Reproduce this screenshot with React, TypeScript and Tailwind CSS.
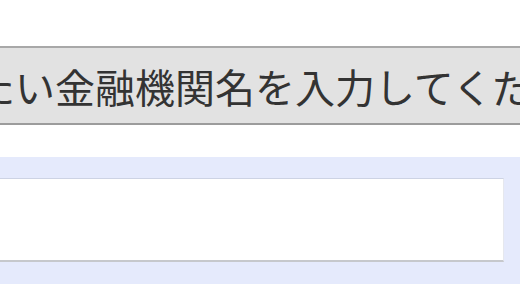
export default function App() {
  return (
    <div className="h-[300px] w-[520px] overflow-hidden bg-white pt-[46px] font-['Noto_Sans_CJK_JP',sans-serif]">
      <div className="flex h-[79px] items-center overflow-hidden border-t-2 border-b-2 border-t-[#a8a8a8] border-b-[#9c9c9c] bg-[#e2e2e2]">
        <p className="ml-[-25px] whitespace-nowrap text-[40px] leading-none text-[#333333]">
          たい金融機関名を入力してください
        </p>
      </div>
      <div className="mt-[32px] h-[127px] bg-[#e5eafc] pt-[21px] pr-[16px]">
        <div className="h-[84px] border-t border-r border-b-2 border-t-[#cdd3e4] border-r-[#e6e8ee] border-b-[#c6c8cc] bg-white"></div>
      </div>
    </div>
  );
}
